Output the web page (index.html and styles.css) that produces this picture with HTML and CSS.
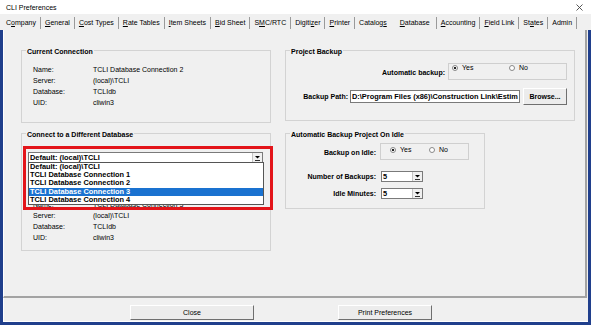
FILE: index.html
```html
<!DOCTYPE html>
<html lang="en">
<head>
    <meta charset="UTF-8">
    <meta name="viewport" content="width=device-width, initial-scale=1.0">
    <title>CLI Preferences</title>
    <link rel="stylesheet" href="styles.css">
</head>
<body>
    <div class="window">
        <div class="titlebar">
            <span>CLI Preferences</span>
            <svg class="close-x" width="7" height="7" viewBox="0 0 7 7">
                <path d="M0.5 0.5L6.5 6.5M6.5 0.5L0.5 6.5" stroke="#444" stroke-width="0.9"/>
            </svg>
        </div>

        <div class="tabs">
            <span class="tab">C<u>o</u>mpany</span>
            <span class="tab"><u>G</u>eneral</span>
            <span class="tab"><u>C</u>ost Types</span>
            <span class="tab"><u>R</u>ate Tables</span>
            <span class="tab"><u>I</u>tem Sheets</span>
            <span class="tab"><u>B</u>id Sheet</span>
            <span class="tab">S<u>M</u>C/RTC</span>
            <span class="tab">Digiti<u>z</u>er</span>
            <span class="tab"><u>P</u>rinter</span>
            <span class="tab before-active">Catalog<u>s</u></span>
            <span class="tab active"><u>D</u>atabase</span>
            <span class="tab"><u>A</u>ccounting</span>
            <span class="tab"><u>F</u>ield Link</span>
            <span class="tab">St<u>a</u>tes</span>
            <span class="tab">Admin</span>
        </div>

        <div class="frame">
            <div class="panel">
                <div class="groups">
                    <fieldset class="group current">
                        <legend>Current Connection</legend>
                        <div class="info">
                            <span>Name:</span><span>TCLI Database Connection 2</span>
                            <span>Server:</span><span>(local)\TCLI</span>
                            <span>Database:</span><span>TCLIdb</span>
                            <span>UID:</span><span>cliwin3</span>
                        </div>
                    </fieldset>

                    <fieldset class="group backup">
                        <legend>Project Backup</legend>
                        <div class="row auto-row">
                            <span class="label">Automatic backup:</span>
                            <div class="radios wide-radios">
                                <span class="radio"><span class="dot checked"></span>Yes</span>
                                <span class="radio"><span class="dot"></span>No</span>
                            </div>
                        </div>
                        <div class="row path-row">
                            <span class="label">Backup Path:</span>
                            <div class="textbox">D:\Program Files (x86)\Construction Link\Estim</div>
                            <button class="btn browse">Browse...</button>
                        </div>
                    </fieldset>

                    <fieldset class="group connect">
                        <legend>Connect to a Different Database</legend>
                        <div class="combo-wrap">
                            <div class="combo">
                                <span class="value">Default: (local)\TCLI</span>
                                <span class="arrow">
                                    <svg width="7" height="6" viewBox="0 0 7 6"><path d="M1 1H6L3.5 3.5Z" fill="#000"/><path d="M1 5.5H6" stroke="#000" stroke-width="0.8"/></svg>
                                </span>
                            </div>
                            <ul class="droplist">
                                <li>Default: (local)\TCLI</li>
                                <li>TCLI Database Connection 1</li>
                                <li>TCLI Database Connection 2</li>
                                <li class="selected">TCLI Database Connection 3</li>
                                <li>TCLI Database Connection 4</li>
                            </ul>
                            <div class="highlight"></div>
                        </div>
                        <!-- only the bottom of the name row shows under the open list -->
                        <div class="peek">
                            <div class="info peek-line">
                                <span>Name:</span><span>TCLI Database Connection 3</span>
                            </div>
                        </div>
                        <div class="info lower">
                            <span>Server:</span><span>(local)\TCLI</span>
                            <span>Database:</span><span>TCLIdb</span>
                            <span>UID:</span><span>cliwin3</span>
                        </div>
                    </fieldset>

                    <fieldset class="group idle">
                        <legend>Automatic Backup Project On Idle</legend>
                        <div class="row idle-first">
                            <span class="label">Backup on Idle:</span>
                            <div class="radios narrow-radios">
                                <span class="radio"><span class="dot checked"></span>Yes</span>
                                <span class="radio"><span class="dot"></span>No</span>
                            </div>
                        </div>
                        <div class="row idle-second">
                            <span class="label">Number of Backups:</span>
                            <div class="combo small">
                                <span class="value">5</span>
                                <span class="arrow">
                                    <svg width="7" height="6" viewBox="0 0 7 6"><path d="M1 1H6L3.5 3.5Z" fill="#000"/><path d="M1 5.5H6" stroke="#000" stroke-width="0.8"/></svg>
                                </span>
                            </div>
                        </div>
                        <div class="row idle-third">
                            <span class="label">Idle Minutes:</span>
                            <div class="combo small">
                                <span class="value">5</span>
                                <span class="arrow">
                                    <svg width="7" height="6" viewBox="0 0 7 6"><path d="M1 1H6L3.5 3.5Z" fill="#000"/><path d="M1 5.5H6" stroke="#000" stroke-width="0.8"/></svg>
                                </span>
                            </div>
                        </div>
                    </fieldset>
                </div>
            </div>

            <div class="buttons">
                <button class="btn close-btn">Close</button>
                <button class="btn print-btn">Print Preferences</button>
            </div>
        </div>
    </div>
</body>
</html>
```

FILE: styles.css
```css
* {
    box-sizing: border-box;
}
body {
    margin: 0;
    font-family: "Liberation Sans", Arial, sans-serif;
    font-size: 7px;
    color: #000;
    background-color: #f0f0f0;
}
.window {
    width: 591px;
    height: 325px;
    display: flex;
    flex-direction: column;
}
.titlebar {
    height: 14px;
    background-color: #fff;
    display: flex;
    align-items: center;
    justify-content: space-between;
    padding: 0 8px 0 6px;
}
.close-x {
    display: block;
}
.tabs {
    height: 16px;
    display: flex;
    align-items: center;
    padding: 1px 0 0 2px;
}
.tab {
    padding: 0 4px;
    line-height: 12px;
    border-right: 1px solid #9a9a9a;
    white-space: nowrap;
}
.tab.before-active {
    border-right: none;
}
.tab.active {
    padding: 0 6px 0 9px;
}
.frame {
    flex: 1;
    border: 3px solid #203f8c;
    border-top: none;
    display: flex;
    flex-direction: column;
}
.panel {
    height: 268px;
    margin-right: 1px;
    border-left: 1px solid #fff;
    border-right: 2px solid #a3a3a3;
    border-bottom: 2px solid #a3a3a3;
    padding: 15px 0 0 17px;
}
.groups {
    display: grid;
    grid-template-columns: 250px 290px;
    column-gap: 14px;
    row-gap: 5px;
    align-items: start;
}
.group {
    margin: 0;
    padding: 0;
    min-width: 0;
    border: 1px solid #d3d3d3;
}
.group legend {
    font-weight: bold;
    line-height: 7px;
    padding: 3px 1px 0;
    margin-left: 4px;
}
.current {
    height: 78px;
}
.backup {
    height: 76px;
}
.connect {
    height: 123px;
}
.idle {
    height: 81px;
    width: 200px;
}

/* name / server / database / uid lists */
.info {
    display: grid;
    grid-template-columns: 60px auto;
    line-height: 11px;
    padding: 9px 0 0 11px;
    white-space: nowrap;
}
.peek {
    height: 2px;
    margin-top: 42px;
    overflow: hidden;
}
.info.peek-line {
    padding-top: 0;
    margin-top: -6px;
}
.info.lower {
    padding-top: 3px;
}

/* rows with a label on the left */
.row {
    display: flex;
    align-items: center;
}
.label {
    font-weight: bold;
    text-align: right;
    white-space: nowrap;
}
.auto-row {
    margin-top: 8px;
}
.auto-row .label {
    width: 159px;
    margin-right: 3px;
    padding-top: 2px;
}
.path-row {
    margin-top: 8px;
}
.path-row .label {
    width: 62px;
    margin-right: 2px;
}
.idle-first {
    margin-top: 5px;
}
.idle-first .label {
    padding-top: 2px;
}
.idle-second {
    margin-top: 11px;
}
.idle-third {
    margin-top: 6px;
}
.idle .label {
    width: 90px;
    margin-right: 4px;
}

/* radio frames */
.radios {
    height: 17px;
    border: 1px solid #cfcfcf;
    display: flex;
    align-items: flex-start;
    line-height: 8px;
}
.wide-radios {
    width: 119px;
    padding-left: 3px;
}
.wide-radios .radio {
    width: 67px;
}
.narrow-radios {
    width: 89px;
    padding: 2px 0 0 9px;
}
.narrow-radios .radio {
    width: 50px;
}
.radio {
    display: flex;
    align-items: center;
    gap: 4px;
}
.dot {
    width: 6px;
    height: 6px;
    border: 1px solid #8a8a8a;
    border-radius: 50%;
    background-color: #fff;
}
.dot.checked {
    background: radial-gradient(circle, #222 0 1.1px, #fff 1.6px);
}

/* text box and combos */
.textbox {
    width: 170px;
    height: 13px;
    background-color: #fff;
    border: 1px solid #7a7a7a;
    font-weight: bold;
    font-size: 7.4px;
    line-height: 11px;
    padding-left: 1px;
    white-space: nowrap;
    overflow: hidden;
}
.combo-wrap {
    position: relative;
    width: 235px;
    margin: 14px 0 0 6px;
}
.combo {
    height: 11px;
    background-color: #fff;
    border: 1px solid #7a7a7a;
    display: flex;
    align-items: center;
    font-weight: bold;
    font-size: 7.4px;
    padding-left: 1px;
}
.combo .value {
    flex: 1;
    white-space: nowrap;
}
.combo.small {
    width: 42px;
    margin-left: 1px;
}
.arrow {
    width: 10px;
    height: 9px;
    display: flex;
    align-items: center;
    justify-content: center;
    background-color: #f0f0f0;
    border-left: 1px solid #c4c4c4;
}
.arrow svg {
    display: block;
}
.droplist {
    position: absolute;
    top: 10px;
    left: 0;
    width: 236px;
    margin: 0;
    padding: 0;
    list-style: none;
    background-color: #fff;
    border: 1px solid #555;
    font-weight: bold;
    font-size: 7.4px;
}
.droplist li {
    line-height: 8.2px;
    padding-left: 1px;
    white-space: nowrap;
}
.droplist .selected {
    background-color: #1a72d0;
    color: #fff;
}
.highlight {
    position: absolute;
    left: -5px;
    top: -6px;
    width: 250px;
    height: 64px;
    border: 3px solid #e3151a;
}

/* buttons */
.btn {
    font-family: inherit;
    font-size: 7px;
    color: #000;
    background-color: #ececec;
    border: 1px solid;
    border-color: #fff #6f6f6f #6f6f6f #fff;
    padding: 0;
}
.browse {
    width: 44px;
    height: 17px;
    margin-left: 3px;
    font-weight: bold;
}
.buttons {
    flex: 1;
    display: flex;
    gap: 84px;
    padding: 7px 0 0 126px;
    border-left: 1px solid #fff;
    border-bottom: 1px solid #fff;
}
.close-btn {
    width: 124px;
    height: 15px;
}
.print-btn {
    width: 94px;
    height: 15px;
}
```
